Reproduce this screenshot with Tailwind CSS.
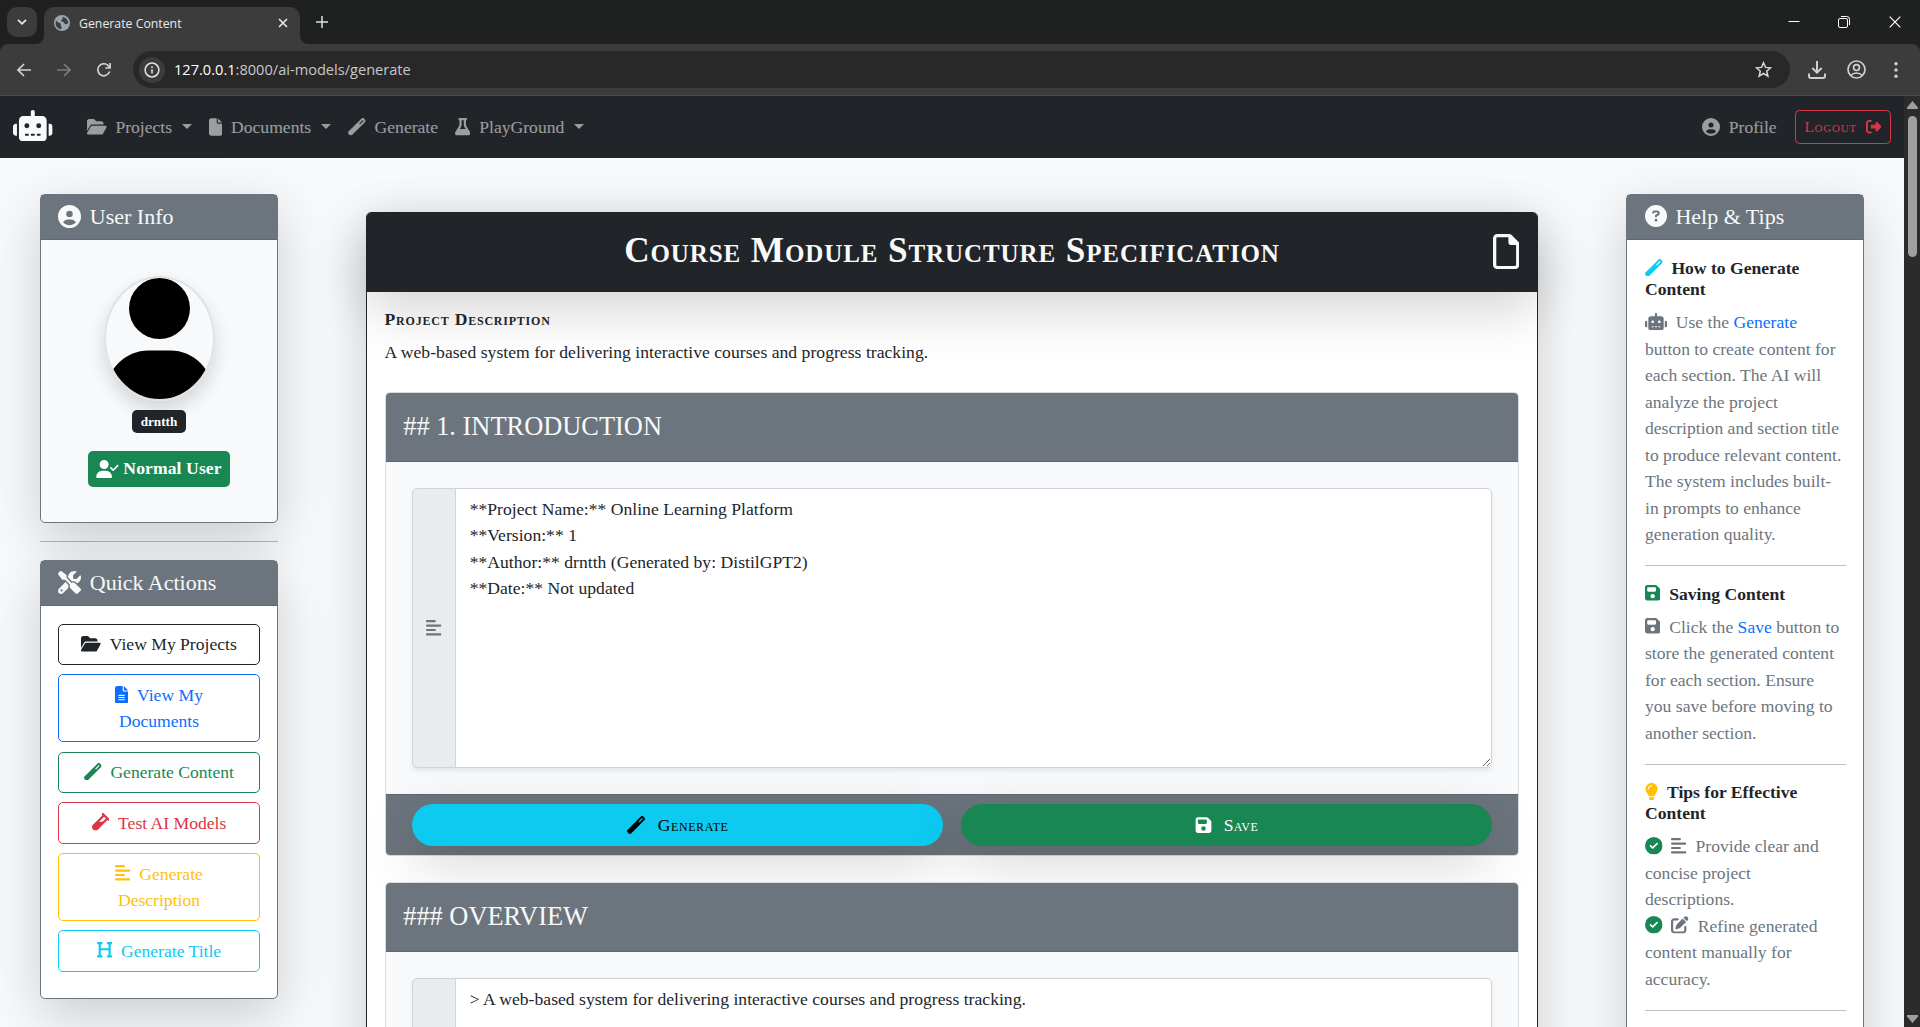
<!DOCTYPE html>
<html lang="en" class="text-[17.6px]">
<head>
<meta charset="utf-8">
<title>Generate Content</title>
<script src="https://cdn.jsdelivr.net/npm/@tailwindcss/browser@4"></script>
</head>
<body class="flex h-[1027px] w-[1920px] flex-col overflow-hidden bg-[#f8f9fa] font-['Liberation_Serif','Times_New_Roman',serif] text-[17.6px] leading-[1.5] text-[#212529]">

<svg class="hidden">
  <symbol id="folder-open" viewBox="0 0 576 512"><path d="M88.7 223.8L0 375.8V96C0 60.7 28.7 32 64 32H181.5c17 0 33.3 6.7 45.3 18.7l26.5 26.5c12 12 28.3 18.7 45.3 18.7H416c35.3 0 64 28.7 64 64v32H144c-22.8 0-43.8 12.1-55.3 31.8zm27.6 16.1C122.1 230 132.6 224 144 224H544c11.5 0 22 6.1 27.7 16.1s5.7 22.2-.1 32.1l-112 192C453.9 474 443.4 480 432 480H32c-11.5 0-22-6.1-27.7-16.1s-5.7-22.2 .1-32.1l112-192z"/></symbol>
  <symbol id="file" viewBox="0 0 384 512"><path d="M0 64C0 28.7 28.7 0 64 0H224V128c0 17.7 14.3 32 32 32H384V448c0 35.3-28.7 64-64 64H64c-35.3 0-64-28.7-64-64V64zm384 64H256V0L384 128z"/></symbol>
  <symbol id="file-lines" viewBox="0 0 384 512"><path d="M64 0C28.7 0 0 28.7 0 64V448c0 35.3 28.7 64 64 64H320c35.3 0 64-28.7 64-64V160H256c-17.7 0-32-14.3-32-32V0H64zM256 0V128H384L256 0zM112 256H272c8.8 0 16 7.2 16 16s-7.2 16-16 16H112c-8.8 0-16-7.2-16-16s7.2-16 16-16zm0 64H272c8.8 0 16 7.2 16 16s-7.2 16-16 16H112c-8.8 0-16-7.2-16-16s7.2-16 16-16zm0 64H272c8.8 0 16 7.2 16 16s-7.2 16-16 16H112c-8.8 0-16-7.2-16-16s7.2-16 16-16z"/></symbol>
  <symbol id="file-outline" viewBox="0 0 384 512"><path d="M320 464c8.8 0 16-7.2 16-16V160H256c-17.7 0-32-14.3-32-32V48H64c-8.8 0-16 7.2-16 16V448c0 8.8 7.2 16 16 16H320zM0 64C0 28.7 28.7 0 64 0H229.5c17 0 33.3 6.7 45.3 18.7l90.5 90.5c12 12 18.7 28.3 18.7 45.3V448c0 35.3-28.7 64-64 64H64c-35.3 0-64-28.7-64-64V64z"/></symbol>
  <symbol id="wand" viewBox="0 0 512 512"><path d="M14.1 463.3c-18.7-18.7-18.7-49.1 0-67.9L395.4 14.1c18.7-18.7 49.1-18.7 67.9 0l34.6 34.6c18.7 18.7 18.7 49.1 0 67.9L116.5 497.9c-18.7 18.7-49.1 18.7-67.9 0L14.1 463.3zM347.6 187.6l105-105L429.4 59.3l-105 105 23.3 23.3z"/></symbol>
  <symbol id="vial" viewBox="0 0 512 512"><path d="M342.6 9.4c-12.5-12.5-32.8-12.5-45.3 0s-12.5 32.8 0 45.3l9.4 9.4L28.1 342.6C10.1 360.6 0 385 0 410.5V416c0 53 43 96 96 96h5.5c25.5 0 49.9-10.1 67.9-28.1L448 205.3l9.4 9.4c12.5 12.5 32.8 12.5 45.3 0s12.5-32.8 0-45.3l-32-32-96-96-32-32zM205.3 256L352 109.3 402.7 160l-96 96H205.3z"/></symbol>
  <symbol id="flask" viewBox="0 0 448 512"><path d="M288 0H160 128C110.3 0 96 14.3 96 32s14.3 32 32 32V196.8c0 11.8-3.3 23.5-9.5 33.5L10.3 406.2C3.6 417.2 0 429.7 0 442.6C0 480.9 31.1 512 69.4 512H378.6c38.3 0 69.4-31.1 69.4-69.4c0-12.8-3.6-25.4-10.3-36.4L329.5 230.4c-6.2-10.1-9.5-21.7-9.5-33.5V64c17.7 0 32-14.3 32-32s-14.3-32-32-32H288zM192 196.8V64h64V196.8c0 23.7 6.6 46.9 19 67.1L309.5 320h-171L173 263.9c12.4-20.2 19-43.4 19-67.1z"/></symbol>
  <symbol id="circle-user" viewBox="0 0 512 512"><path d="M399 384.2C376.9 345.8 335.4 320 288 320H224c-47.4 0-88.9 25.8-111 64.2c35.2 39.2 86.2 63.8 143 63.8s107.8-24.7 143-63.8zM0 256a256 256 0 1 1 512 0A256 256 0 1 1 0 256zm256 16a72 72 0 1 0 0-144 72 72 0 1 0 0 144z"/></symbol>
  <symbol id="circle-question" viewBox="0 0 512 512"><path d="M256 512A256 256 0 1 0 256 0a256 256 0 1 0 0 512zM169.8 165.3c7.9-22.3 29.1-37.3 52.8-37.3h58.3c34.9 0 63.1 28.3 63.1 63.1c0 22.6-12.1 43.5-31.7 54.8L280 264.4c-.2 13-10.9 23.6-24 23.6c-13.3 0-24-10.7-24-24V250.5c0-8.6 4.6-16.5 12.1-20.8l44.3-25.4c4.7-2.7 7.6-7.7 7.6-13.1c0-8.4-6.8-15.1-15.1-15.1H222.6c-3.4 0-6.4 2.1-7.5 5.3l-.4 1.2c-4.4 12.5-18.2 19-30.6 14.6s-19-18.2-14.6-30.6l.4-1.2zM224 352a32 32 0 1 1 64 0 32 32 0 1 1 -64 0z"/></symbol>
  <symbol id="robot" viewBox="0 0 640 512"><path d="M320 0c17.7 0 32 14.3 32 32V96H472c39.8 0 72 32.2 72 72V440c0 39.8-32.2 72-72 72H168c-39.8 0-72-32.2-72-72V168c0-39.8 32.2-72 72-72H288V32c0-17.7 14.3-32 32-32zM208 384c-8.8 0-16 7.2-16 16s7.2 16 16 16h32c8.8 0 16-7.2 16-16s-7.2-16-16-16H208zm96 0c-8.8 0-16 7.2-16 16s7.2 16 16 16h32c8.8 0 16-7.2 16-16s-7.2-16-16-16H304zm96 0c-8.8 0-16 7.2-16 16s7.2 16 16 16h32c8.8 0 16-7.2 16-16s-7.2-16-16-16H400zM264 256a40 40 0 1 0 -80 0 40 40 0 1 0 80 0zm152 40a40 40 0 1 0 0-80 40 40 0 1 0 0 80zM48 224H64V416H48c-26.5 0-48-21.5-48-48V272c0-26.5 21.5-48 48-48zm544 0c26.5 0 48 21.5 48 48v96c0 26.5-21.5 48-48 48H576V224h16z"/></symbol>
  <symbol id="floppy" viewBox="0 0 448 512"><path d="M64 32C28.7 32 0 60.7 0 96V416c0 35.3 28.7 64 64 64H384c35.3 0 64-28.7 64-64V173.3c0-17-6.7-33.3-18.7-45.3L352 50.7C340 38.7 323.7 32 306.7 32H64zm0 96c0-17.7 14.3-32 32-32H288c17.7 0 32 14.3 32 32v64c0 17.7-14.3 32-32 32H96c-17.7 0-32-14.3-32-32V128zM224 288a64 64 0 1 1 0 128 64 64 0 1 1 0-128z"/></symbol>
  <symbol id="align-left" viewBox="0 0 448 512"><path d="M288 64c0 17.7-14.3 32-32 32H32C14.3 96 0 81.7 0 64S14.3 32 32 32H256c17.7 0 32 14.3 32 32zm0 256c0 17.7-14.3 32-32 32H32c-17.7 0-32-14.3-32-32s14.3-32 32-32H256c17.7 0 32 14.3 32 32zM0 192c0-17.7 14.3-32 32-32H416c17.7 0 32 14.3 32 32s-14.3 32-32 32H32c-17.7 0-32-14.3-32-32zM448 448c0 17.7-14.3 32-32 32H32c-17.7 0-32-14.3-32-32s14.3-32 32-32H416c17.7 0 32 14.3 32 32z"/></symbol>
  <symbol id="heading" viewBox="0 0 448 512"><path d="M0 64C0 46.3 14.3 32 32 32H80h48c17.7 0 32 14.3 32 32s-14.3 32-32 32H112V208H336V96H320c-17.7 0-32-14.3-32-32s14.3-32 32-32h48 48c17.7 0 32 14.3 32 32s-14.3 32-32 32H400V240 416h16c17.7 0 32 14.3 32 32s-14.3 32-32 32H368 320c-17.7 0-32-14.3-32-32s14.3-32 32-32h16V272H112V416h16c17.7 0 32 14.3 32 32s-14.3 32-32 32H80 32c-17.7 0-32-14.3-32-32s14.3-32 32-32H48V240 96H32C14.3 96 0 81.7 0 64z"/></symbol>
  <symbol id="lightbulb" viewBox="0 0 384 512"><path d="M272 384c9.6-31.9 29.5-59.1 49.2-86.2l0 0c5.2-7.1 10.4-14.2 15.4-21.4c19.8-28.5 31.4-63 31.4-100.3C368 78.8 289.2 0 192 0S16 78.8 16 176c0 37.3 11.6 71.9 31.4 100.3c5 7.2 10.2 14.3 15.4 21.4l0 0c19.8 27.1 39.7 54.4 49.2 86.2H272zM192 512c44.2 0 80-35.8 80-80V416H112v16c0 44.2 35.8 80 80 80zM112 176c0 8.8-7.2 16-16 16s-16-7.2-16-16c0-61.9 50.1-112 112-112c8.8 0 16 7.2 16 16s-7.2 16-16 16c-44.2 0-80 35.8-80 80z"/></symbol>
  <symbol id="circle-check" viewBox="0 0 512 512"><path d="M256 512A256 256 0 1 0 256 0a256 256 0 1 0 0 512zM369 209L241 337c-9.4 9.4-24.6 9.4-33.9 0l-64-64c-9.4-9.4-9.4-24.6 0-33.9s24.6-9.4 33.9 0l47 47L335 175c9.4-9.4 24.6-9.4 33.9 0s9.4 24.6 0 33.9z"/></symbol>
  <symbol id="pen-square" viewBox="0 0 512 512"><path d="M471.6 21.7c-21.9-21.9-57.3-21.9-79.2 0L362.3 51.7l97.9 97.9 30.1-30.1c21.9-21.9 21.9-57.3 0-79.2L471.6 21.7zm-299.2 220c-6.1 6.1-10.8 13.6-13.5 21.9l-29.6 88.8c-2.9 8.6-.6 18.1 5.8 24.6s15.9 8.7 24.6 5.8l88.8-29.6c8.2-2.7 15.7-7.4 21.9-13.5L437.7 172.3 339.7 74.3 172.4 241.7zM96 64C43 64 0 107 0 160V416c0 53 43 96 96 96H352c53 0 96-43 96-96V320c0-17.7-14.3-32-32-32s-32 14.3-32 32v96c0 17.7-14.3 32-32 32H96c-17.7 0-32-14.3-32-32V160c0-17.7 14.3-32 32-32h96c17.7 0 32-14.3 32-32s-14.3-32-32-32H96z"/></symbol>
  <symbol id="user-check" viewBox="0 0 640 512"><path d="M96 128a128 128 0 1 1 256 0A128 128 0 1 1 96 128zM0 482.3C0 383.8 79.8 304 178.3 304h91.4C368.2 304 448 383.8 448 482.3c0 16.4-13.3 29.7-29.7 29.7H29.7C13.3 512 0 498.7 0 482.3zM625 177L497 305c-9.4 9.4-24.6 9.4-33.9 0l-64-64c-9.4-9.4-9.4-24.6 0-33.9s24.6-9.4 33.9 0l47 47L591 143c9.4-9.4 24.6-9.4 33.9 0s9.4 24.6 0 33.9z"/></symbol>
  <symbol id="logout" viewBox="0 0 512 512"><path d="M377.9 105.9L500.7 228.7c7.2 7.2 11.3 17.1 11.3 27.3s-4.1 20.1-11.3 27.3L377.9 406.1c-6.4 6.4-15 9.9-24 9.9c-18.7 0-33.9-15.2-33.9-33.9l0-62.1-128 0c-17.7 0-32-14.3-32-32l0-64c0-17.7 14.3-32 32-32l128 0 0-62.1c0-18.7 15.2-33.9 33.9-33.9c9 0 17.6 3.6 24 9.9zM160 96L96 96c-17.7 0-32 14.3-32 32l0 256c0 17.7 14.3 32 32 32l64 0c17.7 0 32 14.3 32 32s-14.3 32-32 32l-64 0c-53 0-96-43-96-96L0 128C0 75 43 32 96 32l64 0c17.7 0 32 14.3 32 32s-14.3 32-32 32z"/></symbol>
  <symbol id="tools" viewBox="0 0 512 512"><path d="M78.6 5C69.1-2.4 55.6-1.5 47 7L7 47c-8.5 8.5-9.4 22-2.1 31.6l80 104c4.5 5.9 11.6 9.4 19 9.4h54.1l109 109c-14.7 29-10 65.4 14.3 89.6l112 112c12.5 12.5 32.8 12.5 45.3 0l64-64c12.5-12.5 12.5-32.8 0-45.3l-112-112c-24.2-24.2-60.6-29-89.6-14.3l-109-109V104c0-7.5-3.5-14.5-9.4-19L78.6 5zM19.9 396.1C7.2 408.8 0 426.1 0 444.1C0 481.6 30.4 512 67.9 512c18 0 35.3-7.2 48-19.9L233.7 374.3c-7.8-20.9-9-43.6-3.6-65.1l-61.7-61.7L19.9 396.1zM512 144c0-10.5-1.1-20.7-3.2-30.5c-2.4-11.2-16.1-14.1-24.2-6l-63.9 63.9c-3 3-7.1 4.7-11.3 4.7H352c-8.8 0-16-7.2-16-16V102.6c0-4.2 1.7-8.3 4.7-11.3l63.9-63.9c8.1-8.1 5.2-21.8-6-24.2C388.7 1.1 378.5 0 368 0C288.5 0 224 64.5 224 144l0 .8 85.3 85.3c36-9.1 75.8 .5 104 28.7L429 274.5c49-23 83-72.8 83-130.5zM56 432a24 24 0 1 1 48 0 24 24 0 1 1 -48 0z"/></symbol>
</svg>

<!-- Browser tab strip -->
<div class="flex h-[44px] shrink-0 items-end bg-[#1f2120] font-['Open_Sans','Noto_Sans',sans-serif]">
  <div class="mb-[7px] ml-[7px] flex h-[30px] w-[30px] items-center justify-center rounded-[10px] bg-[#3c3c3c]">
    <svg class="h-[8px] w-[10px]" viewBox="0 0 10 8" fill="none" stroke="#e8e8e8" stroke-width="1.8"><path d="M1 1.8 5 5.8 9 1.8"/></svg>
  </div>
  <svg class="ml-[-1px] h-[8px] w-[8px]" viewBox="0 0 8 8"><path d="M8 0v8H0A8 8 0 0 0 8 0z" fill="#3c3c3c"/></svg>
  <div class="flex h-[37px] w-[256px] items-center rounded-t-[10px] bg-[#3c3c3c] pr-[12px] pb-[6px] pl-[10px]">
    <svg class="h-[16px] w-[16px]" viewBox="0 0 16 16"><circle cx="8" cy="8" r="8" fill="#9aa3b0"/><path d="M2 5.2c1.6 2.6 3 2.2 4.4 3 1 .7-.2 1.9.7 2.8.8.8.4 1.9-.1 3.3C3.600 13.700 1.600 11 1.700 8c0-1 .1-2 .3-2.800zM8.300 1.700c1.300.2 3 .9 4 2.100 1.400 1.500 2 3 2 4.500-1.300-.3-1.400 1.100-2.700 1-1.500-.1-1-2-2.400-2.400C7.900 6.500 7 6.300 7.200 5.200c.2-1 1.500-.8 1.800-1.700.2-.7-.7-1-.7-1.800z" fill="#3c3c3c"/></svg>
    <span class="ml-[9px] pt-[2px] text-[12.300px] leading-[16px] whitespace-nowrap text-[#e8eaed]">Generate Content</span>
    <svg class="ml-auto h-[10px] w-[10px]" viewBox="0 0 10 10" stroke="#e8e8e8" stroke-width="1.6"><path d="M1 1 9 9M9 1 1 9"/></svg>
  </div>
  <svg class="h-[8px] w-[8px]" viewBox="0 0 8 8"><path d="M0 0v8h8A8 8 0 0 1 0 0z" fill="#3c3c3c"/></svg>
  <svg class="mb-[16px] ml-[8px] h-[12px] w-[12px]" viewBox="0 0 12 12" stroke="#dedede" stroke-width="1.5"><path d="M6 0v12M0 6h12"/></svg>
  <div class="mb-[16px] ml-auto flex items-center">
    <svg class="h-[12px] w-[12px]" viewBox="0 0 12 12" stroke="#fff" stroke-width="1"><path d="M.5 5.500h11"/></svg>
    <svg class="ml-[38px] h-[12px] w-[12px]" viewBox="0 0 12 12" fill="none" stroke="#fff" stroke-width="1"><rect x=".5" y="2.500" width="9" height="9" rx="1.500"/><path d="M3 .5h5.800a2.700 2.700 0 0 1 2.700 2.700V9"/></svg>
    <svg class="mr-[19px] ml-[39px] h-[12px] w-[12px]" viewBox="0 0 12 12" stroke="#fff" stroke-width="1.200"><path d="M.7.7 11.300 11.300M11.300.7.7 11.300"/></svg>
  </div>
</div>

<!-- Browser toolbar -->
<div class="h-[52px] shrink-0 bg-[#1f2120]">
  <div class="flex h-full items-center rounded-t-[8px] border-b border-[#4a4a4a] bg-[#3c3c3c] font-['Open_Sans','Noto_Sans',sans-serif]">
    <svg class="ml-[17px] h-[14px] w-[14px]" viewBox="0 0 14 14" fill="none" stroke="#d0d0d0" stroke-width="1.700"><path d="M14 7H1.500M7 1 1 7l6 6"/></svg>
    <svg class="ml-[26px] h-[14px] w-[14px]" viewBox="0 0 14 14" fill="none" stroke="#7c7c7c" stroke-width="1.700"><path d="M0 7h12.500M7 1l6 6-6 6"/></svg>
    <svg class="ml-[26px] h-[14px] w-[14px]" viewBox="0 0 14 14" fill="none" stroke="#d0d0d0" stroke-width="1.700"><path d="M12.600 8.500A6 6 0 1 1 11.700 3.200L13 4.700M13.100 0v5H8.300"/></svg>
    <div class="ml-[22px] flex h-[37px] w-[1657px] items-center rounded-full bg-[#282828] pr-[18px] pl-[6px]">
      <div class="flex h-[26px] w-[26px] items-center justify-center rounded-full bg-[#3c3c3c]">
        <svg class="h-[16px] w-[16px]" viewBox="0 0 16 16" fill="none" stroke="#e3e3e3" stroke-width="1.500"><circle cx="8" cy="8" r="6.900"/><path d="M8 7.200v4.300M8 4.300v1.600"/></svg>
      </div>
      <span class="ml-[9px] text-[14.600px] whitespace-nowrap text-[#c7c7c7]"><span class="text-white">127.0.0.1</span>:8000/ai-models/generate</span>
      <svg class="ml-auto h-[17px] w-[17px]" viewBox="0 0 17 17" fill="none" stroke="#d5d5d5" stroke-width="1.500" stroke-linejoin="miter"><path d="M8.500 1.700l2 4.700 5.100.4-3.900 3.400 1.200 5-4.400-2.700-4.400 2.700 1.200-5L1.400 6.800l5.100-.4z"/></svg>
    </div>
    <svg class="ml-[18px] h-[18px] w-[18px]" viewBox="0 0 18 18" fill="none" stroke="#d0d0d0" stroke-width="2"><path d="M9 0v11.500M4.300 7 9 11.700 13.700 7M1 12.500V15a2 2 0 0 0 2 2h12a2 2 0 0 0 2-2v-2.500"/></svg>
    <svg class="ml-[21px] h-[19px] w-[19px]" viewBox="0 0 19 19" fill="none" stroke="#d0d0d0" stroke-width="1.700"><circle cx="9.500" cy="9.500" r="8.500"/><circle cx="9.500" cy="7.600" r="2.900"/><path d="M3.600 15.500c1.700-1.700 3.700-2.500 5.900-2.500s4.200.8 5.900 2.500"/></svg>
    <svg class="ml-[28px] h-[16px] w-[4px]" viewBox="0 0 4 16" fill="#d0d0d0"><circle cx="2" cy="1.800" r="1.700"/><circle cx="2" cy="8" r="1.700"/><circle cx="2" cy="14.200" r="1.700"/></svg>
  </div>
</div>

<div class="flex min-h-0 flex-1">
  <div class="flex min-w-0 flex-1 flex-col">
    <!-- Navbar -->
    <nav class="flex h-[62px] shrink-0 items-center bg-[#212529] px-3 text-white/55">
      <svg class="mb-[3px] h-[31.7px] w-[39.6px] text-[#f8f9fa]" fill="currentColor"><use href="#robot"/></svg>
      <div class="ml-[34px] flex items-center gap-[17px]">
        <a class="flex items-center"><svg class="mr-2 h-[1em] w-[1.125em]" fill="currentColor"><use href="#folder-open"/></svg>Projects<span class="ml-[10px] border-x-[5.28px] border-t-[5.28px] border-x-transparent border-t-current"></span></a>
        <a class="flex items-center"><svg class="mr-2 h-[18px] w-[13.200px]" fill="currentColor"><use href="#file"/></svg>Documents<span class="ml-[10px] border-x-[5.28px] border-t-[5.28px] border-x-transparent border-t-current"></span></a>
        <a class="flex items-center"><svg class="mr-2 h-[1em] w-[1em]" fill="currentColor"><use href="#wand"/></svg>Generate</a>
        <a class="flex items-center"><svg class="mr-2 h-[1em] w-[.875em]" fill="currentColor"><use href="#flask"/></svg>PlayGround<span class="ml-[10px] border-x-[5.28px] border-t-[5.28px] border-x-transparent border-t-current"></span></a>
      </div>
      <div class="ml-auto flex items-center gap-[18px]">
        <a class="flex items-center"><svg class="mr-2 h-[18px] w-[18px]" fill="currentColor"><use href="#circle-user"/></svg>Profile</a>
        <button class="flex h-[34px] items-center rounded border border-[#dc3545] px-2 text-[15.4px] tracking-[.75px] text-[#dc3545] [font-variant:small-caps]">Logout<svg class="ml-2 h-[1em] w-[1em]" fill="currentColor"><use href="#logout"/></svg></button>
      </div>
    </nav>

    <div class="relative flex min-h-0 flex-1 items-start overflow-hidden pl-[40px]">
      <!-- Left column -->
      <aside class="mt-[36px] w-[238px] shrink-0">
        <section class="flex h-[328.600px] flex-col overflow-visible rounded-[5px] border border-[#6c757d] bg-[#f8f9fa] shadow-[0_1rem_3rem_rgba(0,0,0,.175)]">
          <h5 class="flex h-[45px] shrink-0 items-center border-b border-[#5f6771] bg-[#6c757d] px-[17px] pb-[2px] text-[22px] text-[#f8f9fa]"><svg class="mr-2 h-[23px] w-[23px]" fill="currentColor"><use href="#circle-user"/></svg>User Info</h5>
          <div class="flex flex-col items-center pt-[36px]">
            <div class="h-[125px] w-[111px] overflow-hidden rounded-[50%] border-2 border-[#dee2e6] shadow-[0_.5rem_1rem_rgba(0,0,0,.15)]">
              <svg class="h-[122px] w-[107px]" viewBox="0 0 448 512"><path d="M224 256A128 128 0 1 0 224 0a128 128 0 1 0 0 256zm-45.700 48C79.800 304 0 383.800 0 482.300C0 498.700 13.300 512 29.700 512H418.300c16.400 0 29.700-13.300 29.700-29.700C448 383.800 368.200 304 269.700 304H178.300z"/></svg>
            </div>
            <span class="mt-[9px] flex h-[23px] items-center rounded-[5px] bg-[#212529] px-[8.600px] text-[13.200px] leading-none font-bold text-white">drntth</span>
            <span class="mt-[18px] flex h-[36px] items-center rounded-[5px] bg-[#198754] px-2 leading-none font-bold tracking-[.1px] text-white"><svg class="mr-[4px] h-[18px] w-[23px]" fill="currentColor"><use href="#user-check"/></svg>Normal User</span>
          </div>
        </section>
        <hr class="my-[18px] border-t border-black/25">
        <section class="flex h-[439px] flex-col rounded-[5px] border border-[#6c757d] bg-white shadow-[0_1rem_3rem_rgba(0,0,0,.175)]">
          <h5 class="flex h-[45px] shrink-0 items-center border-b border-[#5f6771] bg-[#6c757d] px-[17px] text-[22px] text-[#f8f9fa]"><svg class="mr-2 h-[23px] w-[23px]" fill="currentColor"><use href="#tools"/></svg>Quick Actions</h5>
          <div class="flex flex-col gap-[9.200px] px-[17px] pt-[18px] text-center">
            <a class="rounded-[5px] border border-[#212529] px-3 py-1.5"><svg class="mr-2 inline-block h-[1em] w-[1.125em] align-[-.125em]" fill="currentColor"><use href="#folder-open"/></svg>View My Projects</a>
            <a class="rounded-[5px] border border-[#0d6efd] px-3 py-1.5 text-[#0d6efd]"><svg class="mr-2 inline-block h-[1em] w-[.750em] align-[-.125em]" fill="currentColor"><use href="#file-lines"/></svg>View My<br>Documents</a>
            <a class="rounded-[5px] border border-[#198754] px-3 py-1.5 text-[#198754]"><svg class="mr-2 inline-block h-[1em] w-[1em] align-[-.125em]" fill="currentColor"><use href="#wand"/></svg>Generate Content</a>
            <a class="rounded-[5px] border border-[#dc3545] px-3 py-1.5 text-[#dc3545]"><svg class="mr-2 inline-block h-[1em] w-[1em] align-[-.125em]" fill="currentColor"><use href="#vial"/></svg>Test AI Models</a>
            <a class="rounded-[5px] border border-[#ffc107] px-3 py-1.5 text-[#ffc107]"><svg class="mr-2 inline-block h-[1em] w-[.875em] align-[-.125em]" fill="currentColor"><use href="#align-left"/></svg>Generate<br>Description</a>
            <a class="rounded-[5px] border border-[#0dcaf0] px-3 py-1.5 text-[#0dcaf0]"><svg class="mr-2 inline-block h-[1em] w-[.875em] align-[-.125em]" fill="currentColor"><use href="#heading"/></svg>Generate Title</a>
          </div>
        </section>
      </aside>

      <!-- Document -->
      <main class="mt-[54px] ml-[88px] h-[1400px] w-[1172px] shrink-0 rounded-[5px] border border-[#212529] bg-white shadow-[0_1rem_3rem_rgba(0,0,0,.175)]">
        <header class="relative flex h-[79px] items-center justify-center rounded-t-[4px] bg-[#212529] pb-[2px] text-[35.200px] text-[#f8f9fa] shadow-[0_1rem_3rem_rgba(0,0,0,.175)]">
          <h1 class="leading-[1.2] font-bold tracking-[.9px] [font-variant:small-caps]">Course Module Structure Specification</h1>
          <svg class="absolute top-[21px] right-4 h-[1em] w-[.750em]" fill="currentColor"><use href="#file-outline"/></svg>
        </header>
        <div class="px-4 pt-[17px]">
          <h6 class="relative mb-2 leading-[1.2] font-bold tracking-[.78px] [font-variant:small-caps]">Project Description</h6>
          <p class="relative tracking-[.03px]">A web-based system for delivering interactive courses and progress tracking.</p>

          <section class="relative mt-6 rounded-[5px] border border-[#dadde0] bg-[#f8f9fa]">
            <h4 class="flex h-[69px] items-center rounded-t-[4px] border-b border-[#5f6771] bg-[#6c757d] px-4 pt-[1px] text-[26.400px] text-[#f8f9fa]">## 1. INTRODUCTION</h4>
            <div class="p-6">
              <div class="flex h-[279.700px] rounded-[5px] shadow-[0_.125rem_.25rem_rgba(0,0,0,.075)]">
                <span class="flex w-[44px] shrink-0 items-center justify-center rounded-l-[5px] border border-[#ced4da] bg-[#e9ecef] text-[#6c757d]"><svg class="h-[1em] w-[.875em]" fill="currentColor"><use href="#align-left"/></svg></span>
                <textarea class="ml-[-1px] flex-1 resize rounded-r-[5px] border border-[#ced4da] bg-white px-[13.700px] py-1.5 leading-[26.500px] tracking-[.02px]">**Project Name:** Online Learning Platform
**Version:** 1
**Author:** drntth (Generated by: DistilGPT2)
**Date:** Not updated</textarea>
              </div>
            </div>
            <footer class="flex gap-4 rounded-b-[4px] border-t border-[#5f6771] bg-[#6c757d] px-6 pt-[9px] pb-[8.500px]">
              <button class="flex h-[42px] flex-1 items-center justify-center rounded-full bg-[#0dcaf0] tracking-[.6px] text-black shadow-[0_1rem_3rem_rgba(0,0,0,.175)] [font-variant:small-caps]"><svg class="mr-[13px] h-[18px] w-[18px]" fill="currentColor"><use href="#wand"/></svg>Generate</button>
              <button class="flex h-[42px] flex-1 items-center justify-center rounded-full bg-[#198754] tracking-[.4px] text-white shadow-[0_1rem_3rem_rgba(0,0,0,.175)] [font-variant:small-caps]"><svg class="mr-[12px] h-[18px] w-[17px]" fill="currentColor"><use href="#floppy"/></svg>Save</button>
            </footer>
          </section>

          <section class="relative mt-[26px] rounded-[5px] border border-[#dadde0] bg-[#f8f9fa]">
            <h4 class="flex h-[69px] items-center rounded-t-[4px] border-b border-[#5f6771] bg-[#6c757d] px-4 text-[26.400px] text-[#f8f9fa]">### OVERVIEW</h4>
            <div class="p-6">
              <div class="flex h-[280px] rounded-[5px] shadow-[0_.125rem_.25rem_rgba(0,0,0,.075)]">
                <span class="w-[44px] shrink-0 rounded-l-[5px] border border-[#ced4da] bg-[#e9ecef]"></span>
                <textarea class="ml-[-1px] flex-1 resize rounded-r-[5px] border border-[#ced4da] bg-white px-[13.700px] py-1.5 tracking-[.02px]">&gt; A web-based system for delivering interactive courses and progress tracking.</textarea>
              </div>
            </div>
          </section>
        </div>
      </main>

      <!-- Help column -->
      <aside class="mt-[36px] ml-[88px] h-[1200px] w-[238px] shrink-0 rounded-[5px] border border-[#6c757d] bg-white shadow-[0_1rem_3rem_rgba(0,0,0,.175)]">
        <h5 class="flex h-[45px] items-center border-b border-[#5f6771] bg-[#6c757d] px-4 pb-[2px] text-[22px] text-[#f8f9fa]"><svg class="mr-2 h-[1em] w-[1em]" fill="currentColor"><use href="#circle-question"/></svg>Help &amp; Tips</h5>
        <div class="pt-[18px] pr-[17px] pl-[18px] leading-[26.500px] text-[#6c757d]">
          <h6 class="mb-2 leading-[1.2] font-bold text-[#212529]"><svg class="mr-2 inline-block h-[1em] w-[1em] align-[-.125em] text-[#0dcaf0]" fill="currentColor"><use href="#wand"/></svg>How to Generate Content</h6>
          <p><svg class="mr-2 inline-block h-[1em] w-[1.250em] align-[-.125em]" fill="currentColor"><use href="#robot"/></svg>Use the <span class="text-[#0d6efd]">Generate</span><br>button to create content for<br>each section. The AI will<br>analyze the project<br>description and section title<br>to produce relevant content.<br>The system includes built-<br>in prompts to enhance<br>generation quality.</p>
          <hr class="my-4 border-t border-black/25">
          <h6 class="mb-2 leading-[1.2] font-bold text-[#212529]"><svg class="mr-2 inline-block h-[1em] w-[.875em] align-[-.125em] text-[#198754]" fill="currentColor"><use href="#floppy"/></svg>Saving Content</h6>
          <p><svg class="mr-2 inline-block h-[1em] w-[.875em] align-[-.125em]" fill="currentColor"><use href="#floppy"/></svg>Click the <span class="text-[#0d6efd]">Save</span> button to<br>store the generated content<br>for each section. Ensure<br>you save before moving to<br>another section.</p>
          <hr class="my-4 border-t border-black/25">
          <h6 class="mb-2 leading-[1.2] font-bold text-[#212529]"><svg class="mr-2 inline-block h-[1em] w-[.750em] align-[-.125em] text-[#ffc107]" fill="currentColor"><use href="#lightbulb"/></svg>Tips for Effective Content</h6>
          <ul>
            <li><svg class="mr-2 inline-block h-[1em] w-[1em] align-[-.125em] text-[#198754]" fill="currentColor"><use href="#circle-check"/></svg><svg class="mr-2 inline-block h-[1em] w-[.875em] align-[-.125em]" fill="currentColor"><use href="#align-left"/></svg>Provide clear and<br>concise project<br>descriptions.</li>
            <li><svg class="mr-2 inline-block h-[1em] w-[1em] align-[-.125em] text-[#198754]" fill="currentColor"><use href="#circle-check"/></svg><svg class="mr-2 inline-block h-[1em] w-[1em] align-[-.125em]" fill="currentColor"><use href="#pen-square"/></svg>Refine generated<br>content manually for<br>accuracy.</li>
          </ul>
          <hr class="my-4 border-t border-black/25">
        </div>
      </aside>
    </div>
  </div>

  <!-- Page scrollbar -->
  <div class="flex w-[16px] shrink-0 flex-col items-center bg-[#2b2b2b] pt-[5px] pb-[4px]">
    <svg class="h-[8px] w-[11px]" viewBox="0 0 11 8" fill="#9f9f9f"><path d="M5.500 0 11 6.500V8H0V6.500z"/></svg>
    <div class="mt-[7px] h-[141px] w-[9px] rounded-full bg-[#9f9f9f]"></div>
    <svg class="mt-auto h-[8px] w-[11px]" viewBox="0 0 11 8" fill="#9f9f9f"><path d="M5.500 8 11 1.500V0H0v1.500z"/></svg>
  </div>
</div>
</body>
</html>
